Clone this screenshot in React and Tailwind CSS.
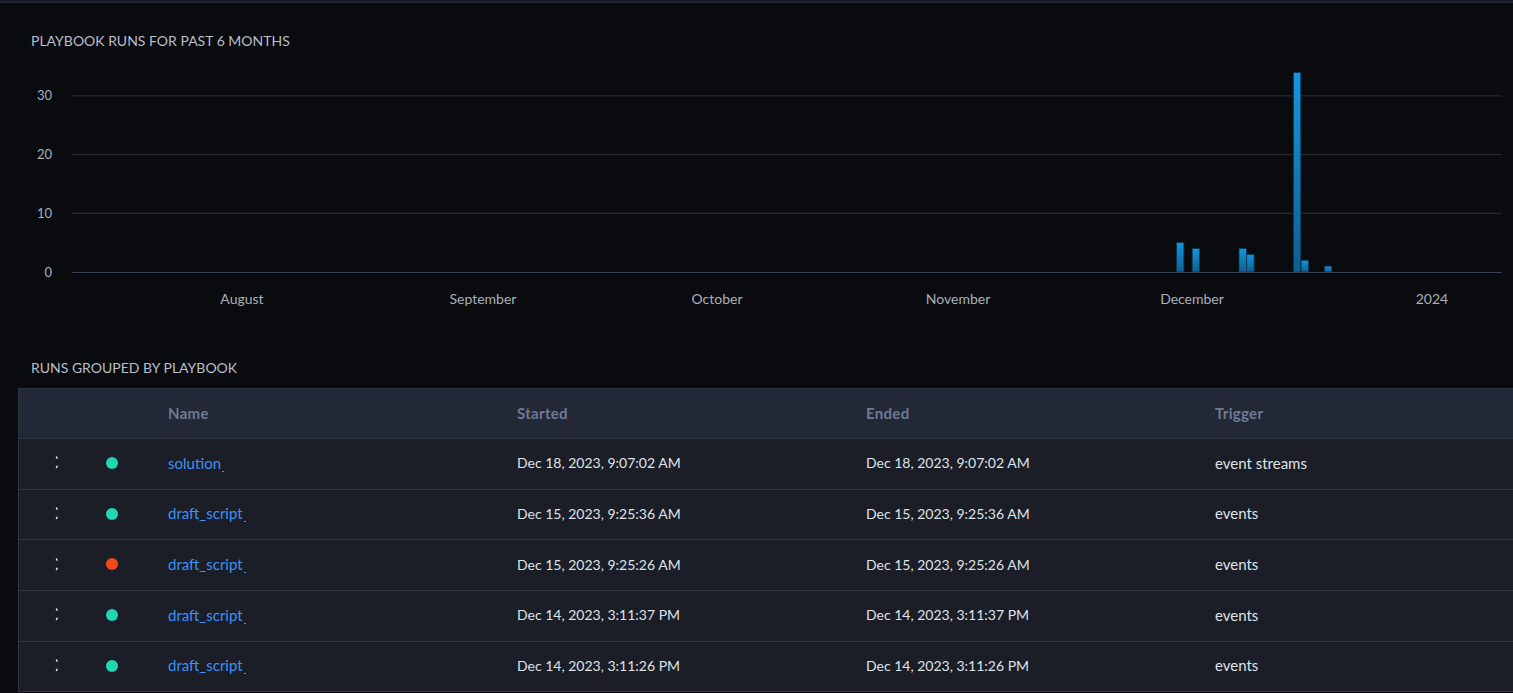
import React from "react";

const FONT = { fontFamily: '"Source Sans Pro", Lato, "Noto Sans", sans-serif' };

const bars = [
  { x: 1176.5, v: 5 },
  { x: 1192.2, v: 4 },
  { x: 1239, v: 4 },
  { x: 1246.7, v: 3 },
  { x: 1293.4, v: 34 },
  { x: 1301.1, v: 2 },
  { x: 1324.4, v: 1 },
];

const months = [
  ["August", 242],
  ["September", 483],
  ["October", 717],
  ["November", 958],
  ["December", 1192],
  ["2024", 1432],
];

function Chart() {
  const y0 = 212;
  const k = 5.87;
  return (
    <svg width="1513" height="260" className="block">
      <defs>
        <linearGradient id="bg" x1="0" y1="0" x2="0" y2="1">
          <stop offset="0" stopColor="#1496df" />
          <stop offset="1" stopColor="#0f5e8f" />
        </linearGradient>
      </defs>
      {[10, 20, 30].map((v) => (
        <line key={v} x1="72" x2="1502" y1={y0 - v * k} y2={y0 - v * k} stroke="#2a2f3b" strokeWidth="1" />
      ))}
      {[0, 10, 20, 30].map((v) => (
        <text key={v} x="52" y={y0 - v * k + 4.5} textAnchor="end" fill="#a9afba" fontSize="13" style={FONT}>
          {v}
        </text>
      ))}
      {bars.map((b, i) => {
        const h = b.v * k;
        return (
          <rect
            key={i}
            x={b.x}
            y={y0 - h}
            width="7.4"
            height={h}
            fill="url(#bg)"
            stroke="#0b3552"
            strokeWidth="0.8"
          />
        );
      })}
      <line x1="72" x2="1502" y1={y0 + 0.5} y2={y0 + 0.5} stroke="#3a4150" strokeWidth="1" />
      {months.map(([m, x]) => (
        <text key={m} x={x} y="244" textAnchor="middle" fill="#a9afba" fontSize="14" style={FONT}>
          {m}
        </text>
      ))}
    </svg>
  );
}

const rows = [
  { ok: true, name: "solution", s: "Dec 18, 2023, 9:07:02 AM", t: "event streams" },
  { ok: true, name: "draft_script", s: "Dec 15, 2023, 9:25:36 AM", t: "events" },
  { ok: false, name: "draft_script", s: "Dec 15, 2023, 9:25:26 AM", t: "events" },
  { ok: true, name: "draft_script", s: "Dec 14, 2023, 3:11:37 PM", t: "events" },
  { ok: true, name: "draft_script", s: "Dec 14, 2023, 3:11:26 PM", t: "events" },
];

function Chevron() {
  return (
    <svg width="4" height="15" viewBox="0 0 4 15" className="block">
      <path d="M1.2 1.5 L2.4 3.6" stroke="#ffffff" strokeWidth="1.3" fill="none" />
      <path d="M2.4 10.8 L1.2 13" stroke="#ffffff" strokeWidth="1.3" fill="none" />
    </svg>
  );
}

export default function App() {
  return (
    <div className="w-[1513px] h-[693px] overflow-hidden bg-[#0a0b0f]" style={FONT}>
      <div className="h-[3px] bg-[#1b1f27] border-b border-[#242935]" />
      <div className="pt-[28px] pl-[31px] text-[14px] leading-5 text-[#b9bec8] uppercase">
        Playbook runs for past 6 months
      </div>
      <div className="mt-[9px]">
        <Chart />
      </div>
      <div className="pl-[31px] mt-[38px] text-[14px] leading-5 text-[#b9bec8] uppercase">
        Runs grouped by playbook
      </div>
      <div className="ml-[18px] mt-[10px] w-[1560px] border-l border-t border-[#2f3441] bg-[#1b1e27]">
        <div className="flex h-[50px] items-center pb-[1px] bg-[#232836] border-b border-[#2f3441] text-[15px] tracking-[0.3px] font-bold text-[#6f7a94]">
          <div className="w-[74px]" />
          <div className="w-[38px]" />
          <div className="w-[349px] pl-[37px]">Name</div>
          <div className="w-[349px] pl-[37px]">Started</div>
          <div className="w-[349px] pl-[37px]">Ended</div>
          <div className="w-[349px] pl-[37px]">Trigger</div>
        </div>
        {rows.map((r, i) => (
          <div key={i} className="flex h-[50.7px] items-center pb-[2px] border-b border-[#2f3441] text-[14px] text-[#dfe2e8]">
            <div className="w-[74px] flex justify-center pl-[1px]">
              <Chevron />
            </div>
            <div className="w-[38px] flex justify-center">
              <span className={`block w-[12px] h-[12px] rounded-full ${r.ok ? "bg-[#1fd8b2]" : "bg-[#f4471d]"}`} />
            </div>
            <div className="w-[349px] pl-[37px] text-[15px] text-[#3d91f5]">
              {r.name}
              <span className="inline-block w-[2px] h-[1px] ml-[1px] bg-[#3d91f5] align-[-3px]" />
            </div>
            <div className="w-[349px] pl-[37px]">{r.s}</div>
            <div className="w-[349px] pl-[37px]">{r.s}</div>
            <div className="w-[349px] pl-[37px] text-[15px]">{r.t}</div>
          </div>
        ))}
      </div>
    </div>
  );
}
